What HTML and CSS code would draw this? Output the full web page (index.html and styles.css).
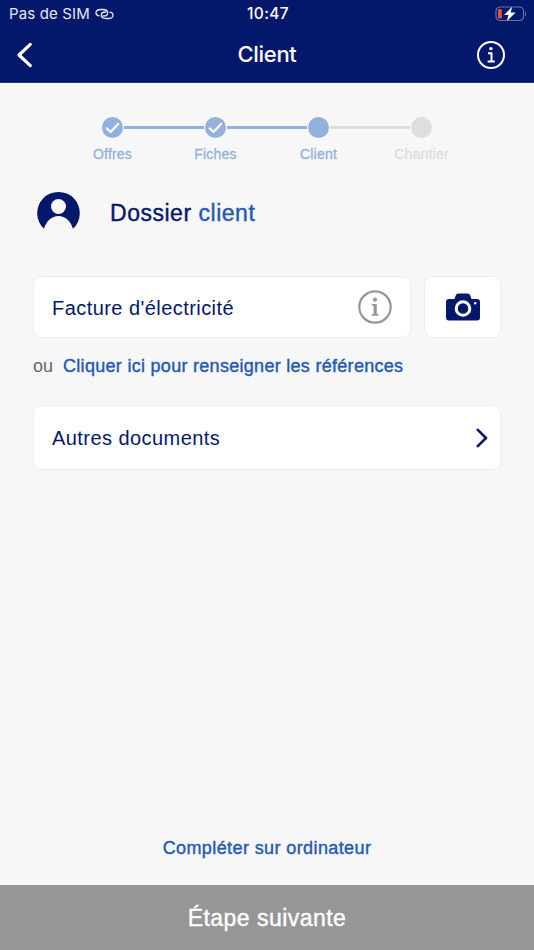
FILE: index.html
```html
<!DOCTYPE html>
<html lang="fr">
<head>
    <meta charset="UTF-8">
    <meta name="viewport" content="width=device-width, initial-scale=1.0">
    <title>Client</title>
    <link rel="stylesheet" href="styles.css">
</head>
<body>
    <header class="header">
        <div class="status">
            <div class="carrier">
                <span>Pas de SIM</span>
                <svg width="19" height="12" viewBox="0 0 19 12" fill="none" stroke="#e4e7f3" stroke-width="1.3" stroke-linecap="round">
                    <path d="M4 7.800C2 7.400 1 6.300 1 5 1 2.800 3 1.500 6 1.500h1.800c3 0 4.900 1.200 4.900 3.200S11 8 8.800 8H8"/>
                    <path d="M15 4.200c2 .4 3 1.500 3 2.800 0 2.200-2 3.500-5 3.500h-1.800c-3 0-4.900-1.200-4.900-3.200S8 4 10.200 4h.8"/>
                </svg>
            </div>
            <span class="time">10:47</span>
            <svg class="battery" width="32" height="16" viewBox="0 0 32 16">
                <rect x="1" y="1" width="27.500" height="13.500" rx="4" fill="none" stroke="#6873a5" stroke-width="1.200"/>
                <path d="M30 5.500c1.500.6 1.500 4.400 0 5z" fill="#6873a5"/>
                <rect x="3" y="3" width="3.800" height="9.500" rx="1.300" fill="#ee4b43"/>
                <path d="M17.300.6 9 8.900h4.500L11.600 15.400l9-8.800h-5z" fill="#fff" stroke="#04186b" stroke-width="1" paint-order="stroke"/>
            </svg>
        </div>
        <div class="nav">
            <svg class="back" width="17" height="26" viewBox="0 0 17 26" fill="none" stroke="#fff" stroke-width="3.200" stroke-linecap="round" stroke-linejoin="round">
                <path d="M14.300 2.400 3 13l11.300 10.600"/>
            </svg>
            <h1 class="title">Client</h1>
            <svg class="info" width="30" height="30" viewBox="0 0 30 30" fill="none" stroke="#fff" stroke-width="2">
                <circle cx="15" cy="15" r="13"/>
                <circle cx="14.900" cy="8.600" r="1.700" fill="#fff" stroke="none"/>
                <path d="M12 13.300h3.500v8M11.600 21.400h7.200"/>
            </svg>
        </div>
    </header>

    <main class="content">
        <ol class="steps">
            <li class="step done">
                <span class="dot">
                    <svg width="21" height="21" viewBox="0 0 21 21" fill="none" stroke="#fff" stroke-width="2.200"><path d="M4.200 10.800 8.600 15 16.800 6.300"/></svg>
                </span>
                <span class="label">Offres</span>
            </li>
            <li class="step done">
                <span class="dot">
                    <svg width="21" height="21" viewBox="0 0 21 21" fill="none" stroke="#fff" stroke-width="2.200"><path d="M4.200 10.800 8.600 15 16.800 6.300"/></svg>
                </span>
                <span class="label">Fiches</span>
            </li>
            <li class="step">
                <span class="dot"></span>
                <span class="label">Client</span>
            </li>
            <li class="step next">
                <span class="dot"></span>
                <span class="label">Chantier</span>
            </li>
        </ol>

        <div class="profile">
            <svg width="43" height="40" viewBox="0 0 43 40">
                <path d="M7 37.800A21.300 21.300 0 1 1 36 37.800C33.600 30 28.300 25 21.500 25S9.400 30 7 37.800z" fill="#04186b"/>
                <circle cx="21.500" cy="15.500" r="7.500" fill="#f7f7f7"/>
            </svg>
            <h2 class="heading">Dossier <span>client</span></h2>
        </div>

        <div class="row">
            <div class="card bill">
                <span class="card-text">Facture d'électricité</span>
                <svg width="34" height="34" viewBox="0 0 34 34">
                    <circle cx="17" cy="17" r="15.700" fill="none" stroke="#969696" stroke-width="2.200"/>
                    <circle cx="17" cy="9.700" r="2.100" fill="#969696"/>
                    <path d="M13.800 14h5v9.800l1.800.6v1.300h-7v-1.300l2-.6v-7.900l-1.800-.6z" fill="#969696"/>
                </svg>
            </div>
            <button class="card camera" aria-label="Photo">
                <svg width="34" height="28" viewBox="0 0 34 28">
                    <path d="M3 6h5.500l1.300-3.700Q10.500.5 12.200.5h9.600q1.700 0 2.400 1.800L25.500 6H31q3 0 3 3v15.500q0 3-3 3H3q-3 0-3-3V9q0-3 3-3z" fill="#04186b"/>
                    <circle cx="17" cy="15.500" r="6.800" fill="none" stroke="#fff" stroke-width="3"/>
                    <circle cx="29.200" cy="10.200" r="1.200" fill="#fff"/>
                </svg>
            </button>
        </div>

        <p class="alt">ou <a class="link refs">Cliquer ici pour renseigner les références</a></p>

        <div class="card docs">
            <span class="card-text">Autres documents</span>
            <svg width="12" height="20" viewBox="0 0 12 20" fill="none" stroke="#04186b" stroke-width="2.600" stroke-linecap="round" stroke-linejoin="round">
                <path d="M1.800 1.800 10 10l-8.200 8.200"/>
            </svg>
        </div>

        <a class="link desktop">Compléter sur ordinateur</a>
    </main>

    <button class="submit">Étape suivante</button>
</body>
</html>
```
FILE: styles.css
```css
* { box-sizing: border-box; }
body { margin: 0; height: 950px; display: flex; flex-direction: column; background-color: #f7f7f7; color: #04186b; font-family: "Liberation Sans", Arial, sans-serif; }
h1, h2, p, ol { margin: 0; padding: 0; font-weight: normal; }
svg { display: block; flex-shrink: 0; }
button { border: 0; padding: 0; font: inherit; }

.header { height: 83px; background-color: #04186b; border-bottom: 1px solid #26377f; color: white; font-family: Inter, sans-serif; }
.status { height: 27px; display: grid; grid-template-columns: 1fr auto 1fr; align-items: center; padding: 0 7px 0 9px; font-size: 15px; line-height: 27px; }
.carrier { display: flex; align-items: center; gap: 5px; color: #e4e7f3; letter-spacing: 0.15px; }
.time { font-weight: 500; font-size: 15.5px; letter-spacing: 0.4px; }
.battery { justify-self: end; }
.nav { height: 55px; display: grid; grid-template-columns: 1fr auto 1fr; align-items: center; padding: 0 28px 0 16px; }
.title { padding-left: 12px; font-size: 22px; line-height: 55px; font-weight: 500; letter-spacing: -0.3px; }
.info { justify-self: end; }

.content { flex: 1; display: flex; flex-direction: column; padding: 34px 33px 0; }
.steps { width: 412px; margin-left: 28px; display: grid; grid-template-columns: repeat(4, 103px); list-style: none; }
.step { display: grid; grid-template-columns: 1fr 23px 1fr; align-items: center; color: #93b1dd; }
.step::before, .step::after { content: ""; height: 3px; background-color: currentColor; }
.step::before { order: 0; }
.dot { order: 1; width: 21px; height: 21px; margin: 0 auto; border-radius: 50%; background-color: currentColor; }
.step::after { order: 2; }
.label { order: 3; grid-column: 1 / 4; margin-top: 8px; text-align: center; font-size: 14px; line-height: 17px; letter-spacing: 0.2px; -webkit-text-stroke: 0.3px; }
.step:first-child::before, .step:last-child::after { visibility: hidden; }
.step:nth-child(3)::after { background-color: #dedede; }
.next { color: #dedede; }

.profile { height: 43px; margin-top: 28px; padding-left: 4px; display: flex; align-items: flex-start; gap: 30px; }
.heading { margin-top: 7px; font-size: 23px; line-height: 30px; letter-spacing: 0.52px; -webkit-text-stroke: 0.4px; }
.heading span { color: #2459b5; }

.row { display: flex; gap: 13px; margin-top: 42px; }
.card { display: flex; align-items: center; background-color: white; border: 1.5px solid #e9eeee; border-radius: 8px; }
.card-text { padding-top: 1px; font-size: 20px; line-height: 26px; letter-spacing: 0.44px; }
.bill { width: 378px; height: 62px; justify-content: space-between; padding: 0 18px; }
.camera { flex: 1; justify-content: center; }
.alt { margin-top: 16px; height: 24px; display: flex; gap: 11px; color: #666; font-size: 18px; line-height: 24px; }
.link { color: #2459b5; font-size: 18px; -webkit-text-stroke: 0.4px; }
.refs { margin-left: -1px; letter-spacing: 0.29px; }
.docs { height: 65px; margin-top: 27px; justify-content: space-between; padding: 0 12px 0 18px; }
.desktop { margin: auto auto 25px; line-height: 24px; letter-spacing: 0.4px; }

.submit { height: 65px; padding-top: 2px; background-color: #969696; color: white; font-size: 23px; letter-spacing: 0.47px; -webkit-text-stroke: 0.4px; }
```
